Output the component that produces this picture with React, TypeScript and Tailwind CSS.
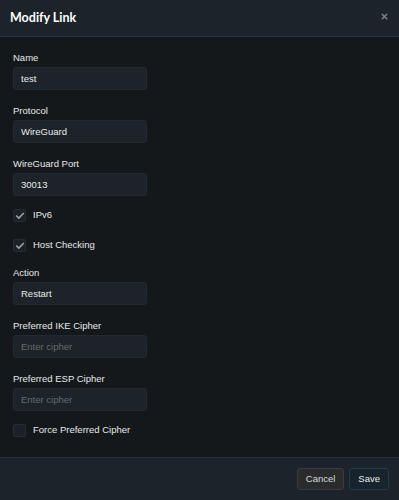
import { Check, X } from "lucide-react";

interface FieldProps {
  label: string;
  value?: string;
  placeholder?: string;
  first?: boolean;
}

function Field({ label, value, placeholder, first }: FieldProps) {
  return (
    <div className={first ? "" : "mt-[13px]"}>
      <label className="block h-[15px] mb-[2px] text-[9.5px] leading-[15px] text-[#e6e8ea]">{label}</label>
      <input
        className="block w-[134px] h-[23px] px-[7px] rounded-[3px] bg-[#1d2328] border border-[#222a31] text-[9.5px] text-[#e8eaec] placeholder:text-[#656b71] outline-none"
        defaultValue={value}
        placeholder={placeholder}
      />
    </div>
  );
}

function CheckRow({ label, checked, className }: { label: string; checked: boolean; className: string }) {
  return (
    <div className={`flex items-center h-[13px] ${className}`}>
      <span className="flex items-center justify-center w-[13px] h-[13px] rounded-[2px] bg-[#1b2126] border border-[#252c33]">
        {checked && <Check className="w-[10px] h-[10px] text-[#9a9ea2]" strokeWidth={4} />}
      </span>
      <span className="ml-[7px] text-[9.5px] text-[#e6e8ea]">{label}</span>
    </div>
  );
}

export default function App() {
  return (
    <div className="w-[399px] h-[500px] flex flex-col bg-[#15181b] font-['Liberation_Sans',Arial,sans-serif]">
      {/* Header */}
      <div className="h-[37px] flex items-center justify-between pl-[10px] pr-[10px] bg-[#1c232a] border-b border-[#28323b]">
        <h2 className="text-[12.5px] font-bold text-white font-['Lato',sans-serif]">Modify Link</h2>
        <X className="w-[9px] h-[9px] mb-[4px] text-[#7c8186]" strokeWidth={4} />
      </div>

      {/* Body */}
      <div className="flex-1 px-[13px] pt-[13px]">
        <Field label="Name" value="test" first />
        <Field label="Protocol" value="WireGuard" />
        <Field label="WireGuard Port" value="30013" />
        <CheckRow label="IPv6" checked className="mt-[13px]" />
        <CheckRow label="Host Checking" checked className="mt-[17px]" />
        <div className="mt-[7px]">
          <Field label="Action" value="Restart" />
        </div>
        <Field label="Preferred IKE Cipher" placeholder="Enter cipher" />
        <Field label="Preferred ESP Cipher" placeholder="Enter cipher" />
        <CheckRow label="Force Preferred Cipher" checked={false} className="mt-[13px]" />
      </div>

      {/* Footer */}
      <div className="h-[43px] flex items-center justify-end gap-[5px] pr-[10px] bg-[#1c232a] border-t border-[#28323b]">
        <button className="h-[22px] px-[8px] rounded-[3px] bg-[#2a2b2c] border border-[#3a3b3c] text-[9.5px] text-[#d8dadc]">
          Cancel
        </button>
        <button className="h-[22px] px-[8px] rounded-[3px] bg-[#17232d] border border-[#1f3a4e] text-[9.5px] text-[#e8eaec]">
          Save
        </button>
      </div>
    </div>
  );
}
